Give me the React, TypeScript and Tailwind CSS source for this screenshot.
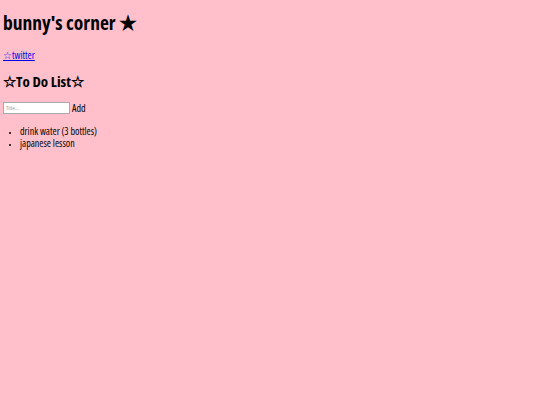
export default function App() {
  return (
    <div className="min-h-[405px] bg-[#ffc0cb] px-[3px] pt-[11px] font-['Open_Sans',sans-serif] text-black font-stretch-condensed">
      <h1 className="text-[19.5px] font-bold leading-[24px]">bunny's corner ★</h1>
      <p className="mt-[14px] text-[10px] leading-[12px]">
        <a href="#" className="text-[#0000ee] underline">
          ☆twitter
        </a>
      </p>
      <h2 className="mt-[11px] text-[15px] font-bold leading-[18px]">☆To Do List☆</h2>
      <form className="mt-[12px] flex items-center gap-[2px]" onSubmit={(e) => e.preventDefault()}>
        <input
          placeholder="Title..."
          className="h-[12px] w-[67px] border border-[#aaa] bg-white px-[2px] text-[6px] placeholder:text-[#999]"
        />
        <button type="button" className="text-[10px] leading-[12px]">
          Add
        </button>
      </form>
      <ul className="mt-[11px] list-disc pl-[17px] text-[10px] leading-[12px] marker:text-[7px]">
        <li className="h-[12px]">drink water (3 bottles)</li>
        <li className="h-[12px]">japanese lesson</li>
      </ul>
    </div>
  );
}
